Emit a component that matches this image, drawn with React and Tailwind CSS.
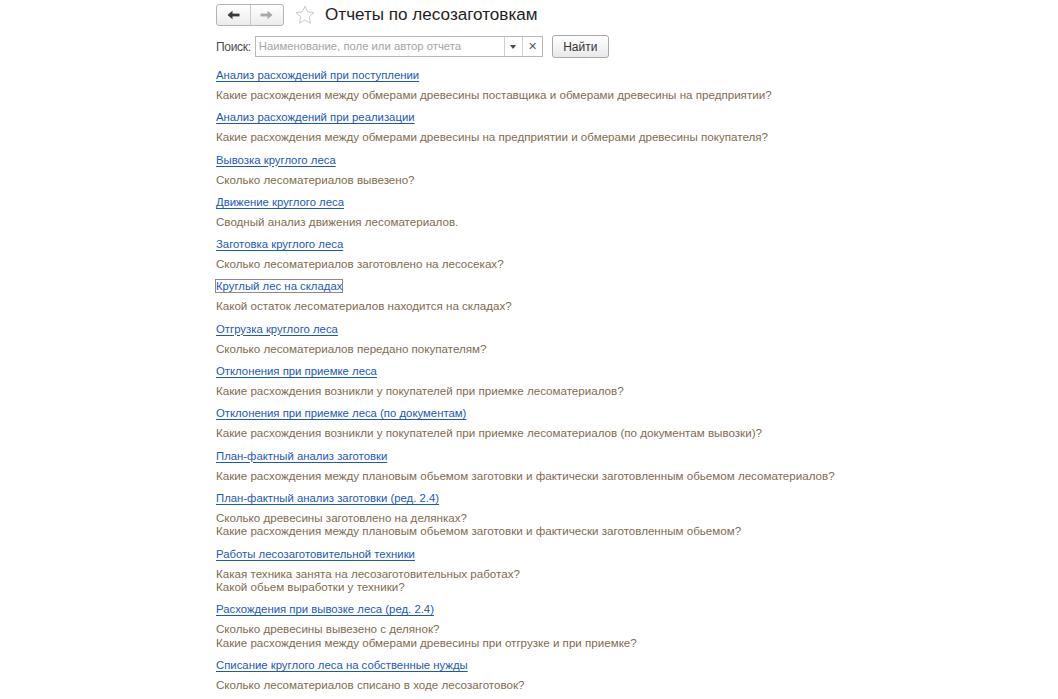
const reports = [
  { title: 'Анализ расхождений при поступлении', desc: ['Какие расхождения между обмерами древесины поставщика и обмерами древесины на предприятии?'] },
  { title: 'Анализ расхождений при реализации', desc: ['Какие расхождения между обмерами древесины на предприятии и обмерами древесины покупателя?'] },
  { title: 'Вывозка круглого леса', desc: ['Сколько лесоматериалов вывезено?'] },
  { title: 'Движение круглого леса', desc: ['Сводный анализ движения лесоматериалов.'] },
  { title: 'Заготовка круглого леса', desc: ['Сколько лесоматериалов заготовлено на лесосеках?'] },
  { title: 'Круглый лес на складах', desc: ['Какой остаток лесоматериалов находится на складах?'], focused: true },
  { title: 'Отгрузка круглого леса', desc: ['Сколько лесоматериалов передано покупателям?'] },
  { title: 'Отклонения при приемке леса', desc: ['Какие расхождения возникли у покупателей при приемке лесоматериалов?'] },
  { title: 'Отклонения при приемке леса (по документам)', desc: ['Какие расхождения возникли у покупателей при приемке лесоматериалов (по документам вывозки)?'] },
  { title: 'План-фактный анализ заготовки', desc: ['Какие расхождения между плановым обьемом заготовки и фактически заготовленным обьемом лесоматериалов?'] },
  { title: 'План-фактный анализ заготовки (ред. 2.4)', desc: ['Сколько древесины заготовлено на делянках?', 'Какие расхождения между плановым обьемом заготовки и фактически заготовленным обьемом?'] },
  { title: 'Работы лесозаготовительной техники', desc: ['Какая техника занята на лесозаготовительных работах?', 'Какой обьем выработки у техники?'] },
  { title: 'Расхождения при вывозке леса (ред. 2.4)', desc: ['Сколько древесины вывезено с делянок?', 'Какие расхождения между обмерами древесины при отгрузке и при приемке?'] },
  { title: 'Списание круглого леса на собственные нужды', desc: ['Сколько лесоматериалов списано в ходе лесозаготовок?'] },
]

const StarIcon = () => (
  <svg width="22" height="22" viewBox="0 0 24 24" fill="none" stroke="#c4c4c4" strokeWidth="1" strokeLinejoin="round">
    <path d="M12 2.2l2.9 6.4 6.9.7-5.2 4.7 1.5 6.9L12 17.4l-6.1 3.5 1.5-6.9-5.2-4.7 6.9-.7z" />
  </svg>
)

const Arrow = ({ dir, color }) => (
  <svg width="13" height="10" viewBox="0 0 13 10">
    {dir === 'left' ? (
      <>
        <path d="M0.5 5L5.5 0.8V9.2Z" fill={color} />
        <rect x="5" y="3.6" width="7.5" height="2.8" fill={color} />
      </>
    ) : (
      <>
        <path d="M12.5 5L7.5 0.8V9.2Z" fill={color} />
        <rect x="0.5" y="3.6" width="7.5" height="2.8" fill={color} />
      </>
    )}
  </svg>
)

export default function App() {
  return (
    <div className="min-h-[699px] w-[1058px] bg-white font-['Liberation_Sans',Arial,sans-serif] text-[12px]">
      <div className="pl-[216px] pt-[4px]">
        {/* header: history buttons, favourite star, title */}
        <div className="flex items-center h-[22px]">
          <div className="flex h-[22px] w-[68px] rounded-[3px] border border-[#b4b4b4] bg-gradient-to-b from-white to-[#ececec]">
            <div className="flex flex-1 items-center justify-center border-r border-[#c8c8c8]">
              <Arrow dir="left" color="#3a3a3a" />
            </div>
            <div className="flex flex-1 items-center justify-center">
              <Arrow dir="right" color="#a8a8a8" />
            </div>
          </div>
          <div className="ml-[10px] flex items-center">
            <StarIcon />
          </div>
          <h1 className="ml-[9px] text-[17.1px] leading-[22px] text-[#1e1e1e] font-normal">Отчеты по лесозаготовкам</h1>
        </div>

        {/* search row */}
        <div className="mt-[9px] flex items-center h-[23px]">
          <span className="text-[#4a4a4a] tracking-[-0.3px]">Поиск:</span>
          <div className="ml-[4px] flex h-[21px] w-[288px] border border-[#b8b8b8] bg-white">
            <div className="flex-1 pl-[3px] leading-[19px] text-[11.3px] text-[#a4a4a4] whitespace-nowrap overflow-hidden">
              Наименование, поле или автор отчета
            </div>
            <div className="flex w-[18px] items-center justify-center border-l border-[#cfcfcf]">
              <svg width="6" height="4" viewBox="0 0 6 4"><path d="M0 0H6L3 4Z" fill="#4a4a4a" /></svg>
            </div>
            <div className="flex w-[20px] items-center justify-center border-l border-[#cfcfcf] text-[#5a5a5a] text-[11px]">
              ✕
            </div>
          </div>
          <button className="ml-[9px] h-[23px] w-[57px] rounded-[3px] border border-[#a8a8a8] bg-gradient-to-b from-white to-[#e9e9e9] text-[#333]">
            Найти
          </button>
        </div>

        {/* report list */}
        <div className="mt-[9px] flex flex-col">
          {reports.map((r) => (
            <div key={r.title} className="pb-[7.9px]">
              <div className="h-[16px] leading-[16px] text-[11.35px]">
                <a
                  href="#"
                  className={
                    'text-[#1b58bb] underline underline-offset-[2px] decoration-[#1b58bb] ' +
                    (r.focused ? 'outline outline-1 outline-[#8a8a8a] outline-offset-[0px]' : '')
                  }
                >
                  {r.title}
                </a>
              </div>
              <div className="mt-[5px] text-[11.6px] text-[#806c4f] leading-[13.4px]">
                {r.desc.map((d) => (
                  <div key={d}>{d}</div>
                ))}
              </div>
            </div>
          ))}
        </div>
      </div>
    </div>
  )
}
